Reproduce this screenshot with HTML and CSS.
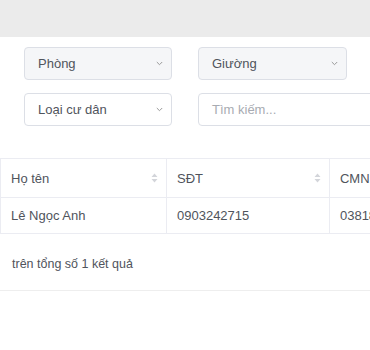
FILE: index.html
```html
<!DOCTYPE html>
<html lang="vi">
<head>
<meta charset="utf-8">
<link rel="stylesheet" href="styles.css">
</head>
<body>
<div class="page">
  <div class="topbar"></div>
  <div class="filters">
    <div class="select disabled"><span>Phòng</span><svg class="chev" width="7" height="5" viewBox="0 0 7 5"><path d="M0.8 1l2.7 2.7 2.7-2.7" fill="none" stroke="#999" stroke-width="1"/></svg></div>
    <div class="select disabled"><span>Giường</span><svg class="chev" width="7" height="5" viewBox="0 0 7 5"><path d="M0.8 1l2.7 2.7 2.7-2.7" fill="none" stroke="#999" stroke-width="1"/></svg></div>
    <div class="spacer"></div>
    <div class="select"><span>Loại cư dân</span><svg class="chev" width="7" height="5" viewBox="0 0 7 5"><path d="M0.8 1l2.7 2.7 2.7-2.7" fill="none" stroke="#999" stroke-width="1"/></svg></div>
    <div class="input wide"><span class="ph">Tìm kiếm...</span></div>
  </div>
  <table class="tbl">
    <thead>
      <tr>
        <th class="c1"><div class="th"><span>Họ tên</span><svg class="sort" width="7" height="10" viewBox="0 0 7 10"><path d="M3.5 0.5L6.5 4H0.5z M3.5 9.5L6.5 6H0.5z" fill="#d3d5da"/></svg></div></th>
        <th class="c2"><div class="th"><span>SĐT</span><svg class="sort" width="7" height="10" viewBox="0 0 7 10"><path d="M3.5 0.5L6.5 4H0.5z M3.5 9.5L6.5 6H0.5z" fill="#d3d5da"/></svg></div></th>
        <th class="c3"><div class="th"><span>CMND</span></div></th>
      </tr>
    </thead>
    <tbody>
      <tr>
        <td>Lê Ngọc Anh</td>
        <td>0903242715</td>
        <td>038188000123</td>
      </tr>
    </tbody>
  </table>
  <div class="footer">trên tổng số 1 kết quả</div>
</div>
</body>
</html>
```
FILE: styles.css
```css
html, body {
  margin: 0;
  padding: 0;
  background: #fff;
  overflow: hidden;
}
.page {
  width: 700px;
  font-family: "Liberation Sans", Arial, sans-serif;
  font-size: 13px;
  color: #50545c;
}
.topbar {
  height: 37px;
  background: #ebebeb;
}
.filters {
  display: grid;
  grid-template-columns: 148px 149px 149px;
  column-gap: 26px;
  row-gap: 13px;
  padding: 10px 24px 0 24px;
}
.select, .input {
  box-sizing: border-box;
  height: 33px;
  border: 1px solid #dcdfe6;
  border-radius: 4px;
  background: #fff;
  display: flex;
  align-items: center;
  justify-content: space-between;
  padding: 0 8px 0 13px;
}
.select.disabled {
  background: #f5f6f8;
}
.input.wide {
  grid-column: span 2;
}
.ph {
  color: #a8abb2;
}
.chev {
  display: block;
}
.tbl {
  margin-top: 32px;
  border-collapse: collapse;
  table-layout: fixed;
  width: 500px;
}
.tbl th, .tbl td {
  border: 1px solid #ebecf2;
  text-align: left;
  font-weight: normal;
  padding: 0 10px;
}
.tbl th {
  height: 38px;
  padding-right: 8px;
}
.tbl td {
  height: 35px;
}
.c1 { width: 146px; }
.c2 { width: 143px; }
.c3 { width: 150px; }
.th {
  display: flex;
  align-items: center;
  justify-content: space-between;
}
.sort {
  display: block;
}
.footer {
  padding: 22px 12px 18px;
  line-height: 16px;
  font-size: 12.5px;
  border-bottom: 1px solid #eeeeee;
}
```
